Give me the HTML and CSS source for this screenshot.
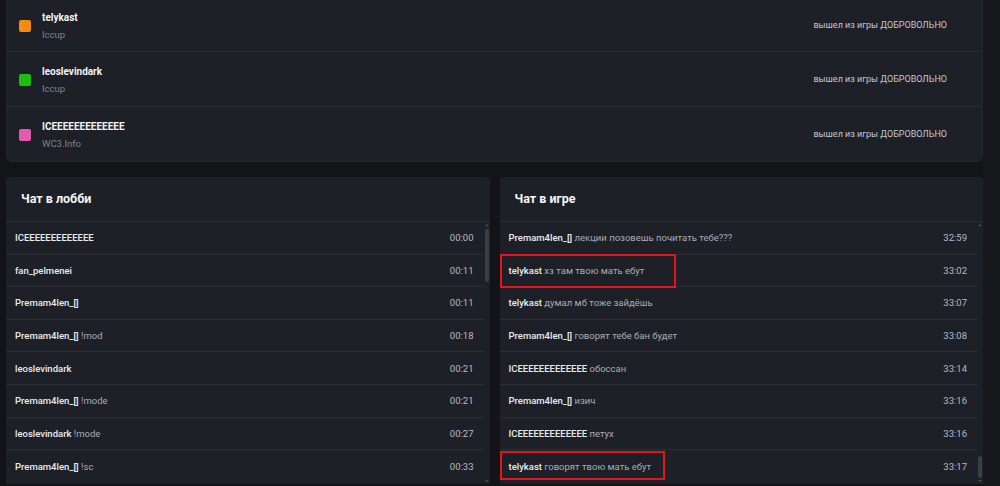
FILE: index.html
```html
<!DOCTYPE html>
<html lang="ru">
<head>
    <meta charset="UTF-8">
    <title>Игра</title>
    <link rel="stylesheet" href="styles.css">
</head>
<body>
<div class="page">
    <div class="content">

        <div class="players">
            <div class="player">
                <span class="color orange"></span>
                <div class="who">
                    <div class="nick">telykast</div>
                    <div class="server">Iccup</div>
                </div>
                <div class="status">вышел из игры ДОБРОВОЛЬНО</div>
            </div>
            <div class="player">
                <span class="color green"></span>
                <div class="who">
                    <div class="nick">leoslevindark</div>
                    <div class="server">Iccup</div>
                </div>
                <div class="status">вышел из игры ДОБРОВОЛЬНО</div>
            </div>
            <div class="player">
                <span class="color pink"></span>
                <div class="who">
                    <div class="nick">ICEEEEEEEEEEEEE</div>
                    <div class="server">WC3.Info</div>
                </div>
                <div class="status">вышел из игры ДОБРОВОЛЬНО</div>
            </div>
        </div>

        <div class="chats">
            <div class="chat">
                <div class="chat-title">Чат в лобби</div>
                <div class="chat-body">
                    <div class="messages">
                        <div class="msg"><span class="text"><b>ICEEEEEEEEEEEEE</b></span><span class="time">00:00</span></div>
                        <div class="msg"><span class="text"><b>fan_pelmenei</b></span><span class="time">00:11</span></div>
                        <div class="msg"><span class="text"><b>Premam4len_[]</b></span><span class="time">00:11</span></div>
                        <div class="msg"><span class="text"><b>Premam4len_[]</b> !mod</span><span class="time">00:18</span></div>
                        <div class="msg"><span class="text"><b>leoslevindark</b></span><span class="time">00:21</span></div>
                        <div class="msg"><span class="text"><b>Premam4len_[]</b> !mode</span><span class="time">00:21</span></div>
                        <div class="msg"><span class="text"><b>leoslevindark</b> !mode</span><span class="time">00:27</span></div>
                        <div class="msg"><span class="text"><b>Premam4len_[]</b> !sc</span><span class="time">00:33</span></div>
                    </div>
                    <div class="scrollbar">
                        <span class="arrow up"></span>
                        <span class="thumb thumb-top"></span>
                        <span class="arrow down"></span>
                    </div>
                </div>
            </div>

            <div class="chat">
                <div class="chat-title">Чат в игре</div>
                <div class="chat-body">
                    <div class="messages">
                        <div class="msg"><span class="text"><b>Premam4len_[]</b> лекции позовешь почитать тебе???</span><span class="time">32:59</span></div>
                        <div class="msg"><span class="mark mark-1"></span><span class="text"><b>telykast</b> хз там твою мать ебут</span><span class="time">33:02</span></div>
                        <div class="msg"><span class="text"><b>telykast</b> думал мб тоже зайдёшь</span><span class="time">33:07</span></div>
                        <div class="msg"><span class="text"><b>Premam4len_[]</b> говорят тебе бан будет</span><span class="time">33:08</span></div>
                        <div class="msg"><span class="text"><b>ICEEEEEEEEEEEEE</b> обоссан</span><span class="time">33:14</span></div>
                        <div class="msg"><span class="text"><b>Premam4len_[]</b> изич</span><span class="time">33:16</span></div>
                        <div class="msg"><span class="text"><b>ICEEEEEEEEEEEEE</b> петух</span><span class="time">33:16</span></div>
                        <div class="msg"><span class="mark mark-2"></span><span class="text"><b>telykast</b> говорят твою мать ебут</span><span class="time">33:17</span></div>
                    </div>
                    <div class="scrollbar">
                        <span class="arrow up"></span>
                        <span class="thumb thumb-bottom"></span>
                        <span class="arrow down"></span>
                    </div>
                </div>
            </div>
        </div>

    </div>
    <div class="page-track"></div>
</div>
</body>
</html>
```

FILE: styles.css
```css
body {
    margin: 0;
    background: #131418;
    font-family: Roboto, "Noto Sans", Arial, sans-serif;
    font-size: 9.5px;
    color: #c9ccd2;
    overflow: hidden;
}

.page {
    display: flex;
    height: 486px;
}

.content {
    flex: 1;
    padding: 0 0 0 6px;
}

.page-track {
    width: 17px;
    background: #17181c;
}

/* players card */

.players {
    margin-top: -1px;
    background: #1e2027;
    border: 1px solid #25272e;
    border-top: none;
    border-radius: 0 0 6px 6px;
}

.player {
    display: flex;
    align-items: center;
    height: 54px;
    padding: 0 35px 0 12px;
    border-bottom: 1px solid #2b2d35;
}

.player:first-child {
    height: 52px;
}

.player:last-child {
    border-bottom: none;
}

.color {
    width: 12px;
    height: 12px;
    border-radius: 2px;
    margin-right: 11px;
    margin-top: 1px;
}

.orange { background: #f28a14; }
.green { background: #1cbf10; }
.pink { background: #e35aae; }

.who {
    flex: 1;
}

.nick {
    font-size: 10px;
    font-weight: 700;
    color: #f1f3f6;
    line-height: 15px;
    margin-top: 1px;
}

.server {
    margin-top: 3px;
    font-size: 9.5px;
    color: #7e828b;
    line-height: 14px;
}

.status {
    color: #c3c7ce;
    font-size: 9px;
    margin-top: -1px;
}

/* chats */

.chats {
    display: flex;
    gap: 10px;
    margin-top: 15px;
}

.chat {
    flex: 1;
    background: #1e2027;
    border-radius: 4px 4px 0 0;
    height: 307px;
    display: flex;
    flex-direction: column;
}

.chat-title {
    height: 44px;
    line-height: 44px;
    padding-left: 15px;
    font-size: 12.5px;
    font-weight: 700;
    color: #f4f5f7;
    border-bottom: 1px solid #2b2d35;
}

.chat-body {
    flex: 1;
    display: flex;
    overflow: hidden;
}

.messages {
    flex: 1;
}

.msg {
    position: relative;
    display: flex;
    align-items: center;
    justify-content: space-between;
    height: 32.6px;
    box-sizing: border-box;
    padding: 0 10px 0 9px;
    border-bottom: 1px solid #2b2d35;
}

.msg:last-child {
    border-bottom: none;
}

.text {
    color: #a8acb4;
}

.text b {
    color: #e9ebef;
    font-weight: 500;
}

.time {
    color: #b5b9c1;
}

.mark {
    position: absolute;
    left: 0;
    border: 2px solid #e3141b;
}

.mark-1 {
    top: -1px;
    width: 172px;
    height: 30px;
}

.mark-2 {
    top: 1px;
    width: 161px;
    height: 25px;
}

.scrollbar {
    width: 6px;
    display: flex;
    flex-direction: column;
    align-items: center;
    padding: 2px 0;
}

.thumb {
    width: 4px;
    border-radius: 2px;
    background: #3b3e46;
}

.thumb-top {
    margin-top: 3px;
    height: 53px;
}

.thumb-bottom {
    margin-top: auto;
    margin-bottom: 2px;
    height: 22px;
}

.arrow {
    width: 0;
    height: 0;
    border-left: 2px solid transparent;
    border-right: 2px solid transparent;
}

.arrow.up {
    border-bottom: 2px solid #4a4d55;
}

.arrow.down {
    margin-top: auto;
    border-top: 2px solid #4a4d55;
}

.thumb-bottom + .arrow.down {
    margin-top: 0;
}
```
